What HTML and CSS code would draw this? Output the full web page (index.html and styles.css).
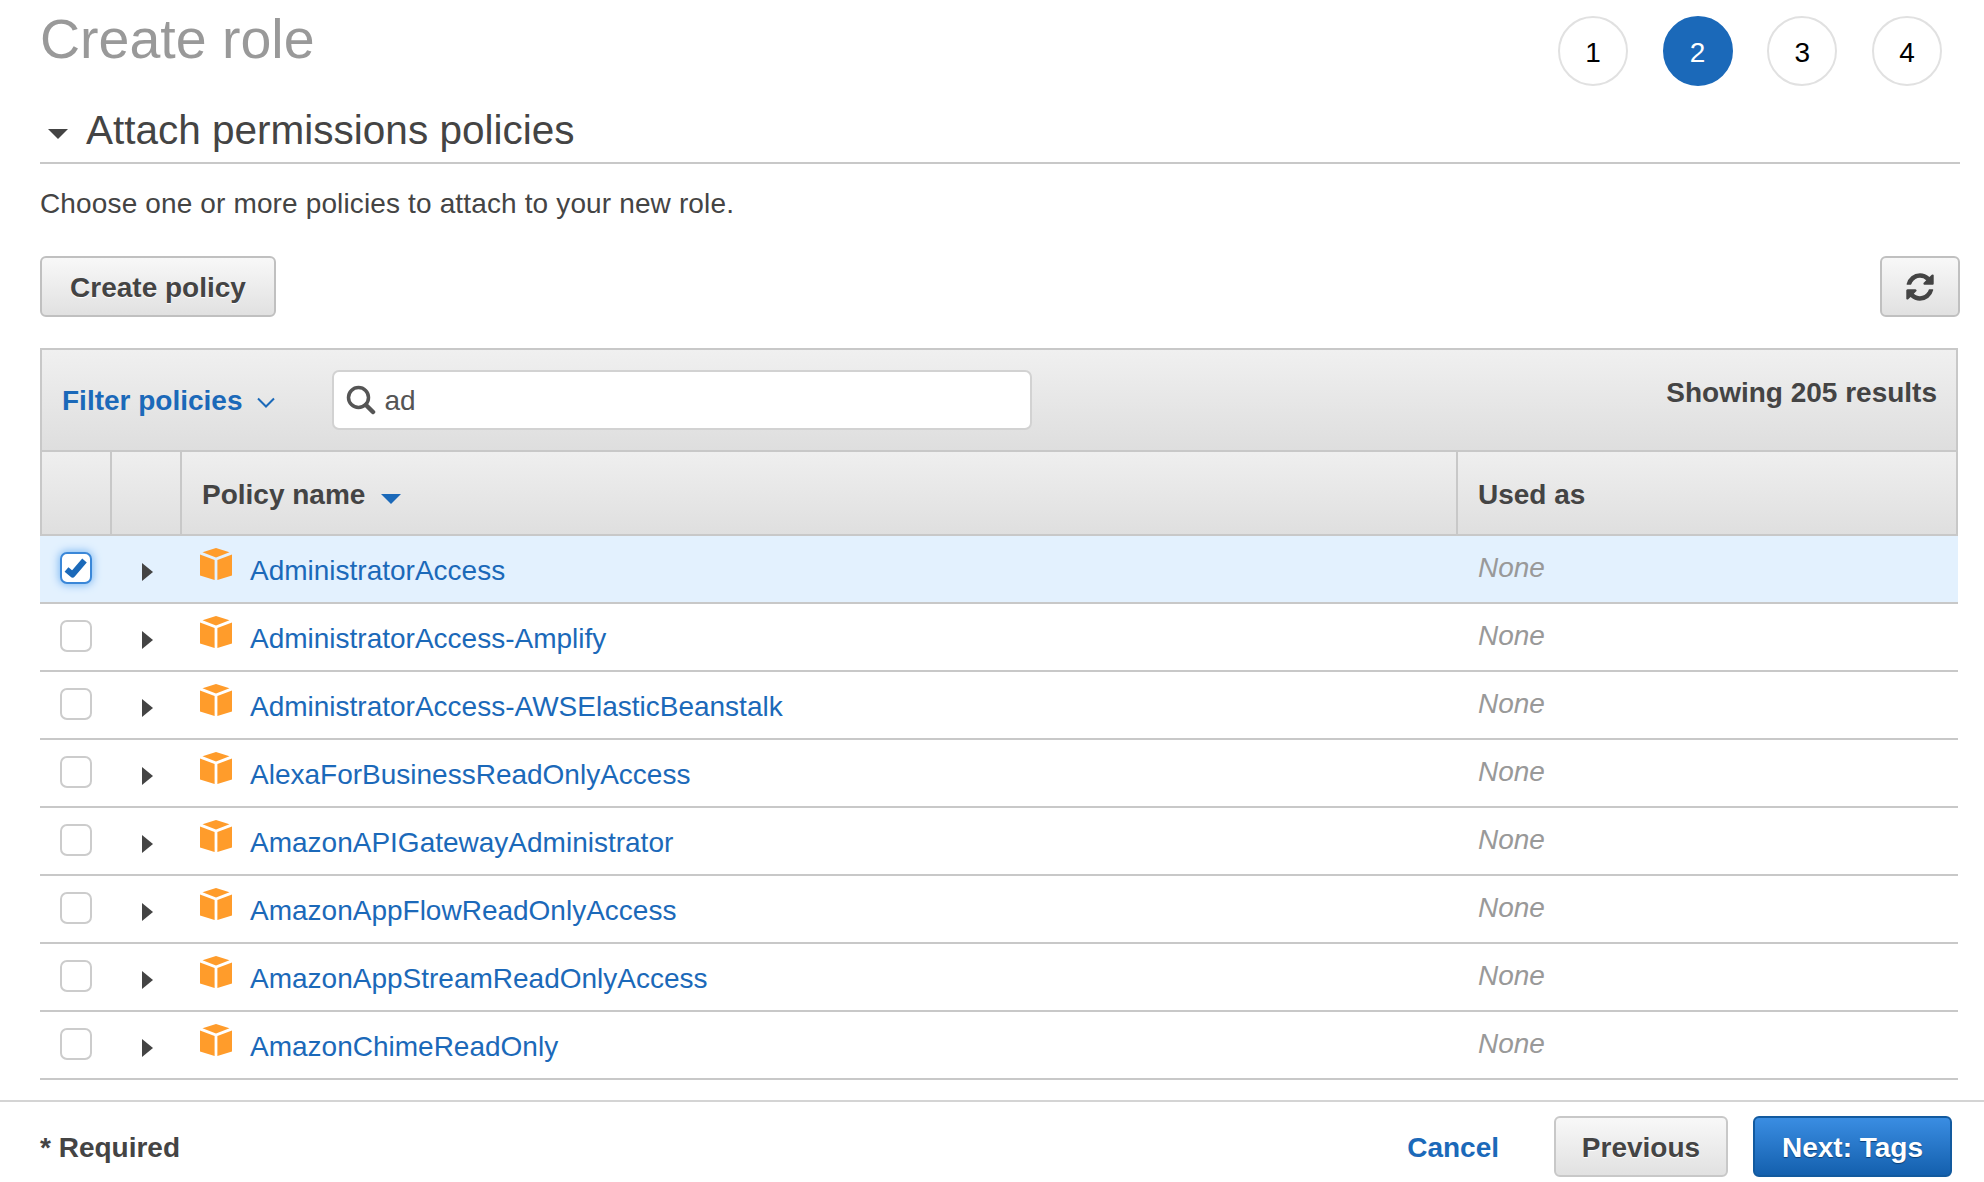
FILE: index.html
```html
<!DOCTYPE html>
<html lang="en">
<head>
    <meta charset="UTF-8">
    <title>Create role</title>
    <link rel="stylesheet" href="styles.css">
</head>
<body>
    <svg class="defs" width="0" height="0">
        <symbol id="cube" viewBox="0 0 32 32">
            <path fill="#ff9c2b" d="M16 0 29.5 4.2 16 9.6 2.5 4.2Z"/>
            <path fill="#ff9c2b" d="M0 6.4 14.6 12V32L0 27.4Z"/>
            <path fill="#ff9c2b" d="M32 6.4 17.4 12V32L32 27.4Z"/>
        </symbol>
    </svg>
    <div id="contener">
        <div class="top">
            <h1>Create role</h1>
            <div class="steps">
                <span class="step">1</span>
                <span class="step active">2</span>
                <span class="step">3</span>
                <span class="step">4</span>
            </div>
        </div>
        <h2><span class="caret-down"></span>Attach permissions policies</h2>
        <p class="intro">Choose one or more policies to attach to your new role.</p>
        <div class="actions">
            <button class="btn btn-create">Create policy</button>
            <button class="btn btn-icon">
                <svg width="32" height="32" viewBox="0 0 1792 1792"><path fill="#444" d="M1639 1056q0 5-1 7-64 268-268 434.5t-478 166.5q-146 0-282.5-55t-243.5-157l-129 129q-19 19-45 19t-45-19-19-45v-448q0-26 19-45t45-19h448q26 0 45 19t19 45-19 45l-137 137q71 66 161 102t187 36q134 0 250-65t186-179q11-17 53-117 8-23 30-23h192q13 0 22.5 9.5t9.5 22.5zm25-800v448q0 26-19 45t-45 19h-448q-26 0-45-19t-19-45 19-45l138-138q-148-137-349-137-134 0-250 65t-186 179q-11 17-53 117-8 23-30 23h-199q-13 0-22.5-9.5t-9.5-22.5v-7q65-268 270-434.5t480-166.5q146 0 284 55.5t245 156.5l130-129q19-19 45-19t45 19 19 45z"/></svg>
            </button>
        </div>
        <div class="policies">
            <div class="filter-bar">
                <a class="filter-link">Filter policies</a>
                <svg class="chevron" width="18" height="11" viewBox="0 0 18 11"><path fill="none" stroke="#1b69b9" stroke-width="2" d="M1 1.5 9 9.5 17 1.5"/></svg>
                <div class="search">
                    <svg width="30" height="30" viewBox="0 0 30 30"><circle cx="12.5" cy="12.5" r="10" fill="none" stroke="#555" stroke-width="3.5"/><path stroke="#555" stroke-width="4.5" stroke-linecap="round" d="M20 20 27 27"/></svg>
                    <span>ad</span>
                </div>
                <div class="count">Showing 205 results</div>
            </div>
            <div class="row head">
                <div></div>
                <div></div>
                <div class="head-name">Policy name<span class="sort-caret"></span></div>
                <div class="head-used">Used as</div>
            </div>
            <div class="row selected">
                <div><span class="check checked"><svg width="28" height="28" viewBox="0 0 28 28"><path fill="none" stroke="#1b69b9" stroke-width="6" stroke-linejoin="round" d="M4.5 15.5 10.5 20.5 22.5 6.5"/></svg></span></div>
                <div><span class="arrow"></span></div>
                <div class="name"><svg class="cube" width="32" height="32"><use href="#cube"/></svg><a>AdministratorAccess</a></div>
                <div class="used">None</div>
            </div>
            <div class="row">
                <div><span class="check"></span></div>
                <div><span class="arrow"></span></div>
                <div class="name"><svg class="cube" width="32" height="32"><use href="#cube"/></svg><a>AdministratorAccess-Amplify</a></div>
                <div class="used">None</div>
            </div>
            <div class="row">
                <div><span class="check"></span></div>
                <div><span class="arrow"></span></div>
                <div class="name"><svg class="cube" width="32" height="32"><use href="#cube"/></svg><a>AdministratorAccess-AWSElasticBeanstalk</a></div>
                <div class="used">None</div>
            </div>
            <div class="row">
                <div><span class="check"></span></div>
                <div><span class="arrow"></span></div>
                <div class="name"><svg class="cube" width="32" height="32"><use href="#cube"/></svg><a>AlexaForBusinessReadOnlyAccess</a></div>
                <div class="used">None</div>
            </div>
            <div class="row">
                <div><span class="check"></span></div>
                <div><span class="arrow"></span></div>
                <div class="name"><svg class="cube" width="32" height="32"><use href="#cube"/></svg><a>AmazonAPIGatewayAdministrator</a></div>
                <div class="used">None</div>
            </div>
            <div class="row">
                <div><span class="check"></span></div>
                <div><span class="arrow"></span></div>
                <div class="name"><svg class="cube" width="32" height="32"><use href="#cube"/></svg><a>AmazonAppFlowReadOnlyAccess</a></div>
                <div class="used">None</div>
            </div>
            <div class="row">
                <div><span class="check"></span></div>
                <div><span class="arrow"></span></div>
                <div class="name"><svg class="cube" width="32" height="32"><use href="#cube"/></svg><a>AmazonAppStreamReadOnlyAccess</a></div>
                <div class="used">None</div>
            </div>
            <div class="row">
                <div><span class="check"></span></div>
                <div><span class="arrow"></span></div>
                <div class="name"><svg class="cube" width="32" height="32"><use href="#cube"/></svg><a>AmazonChimeReadOnly</a></div>
                <div class="used">None</div>
            </div>
        </div>
    </div>
    <footer>
        <div class="required">* Required</div>
        <a class="cancel">Cancel</a>
        <button class="btn btn-prev">Previous</button>
        <button class="btn btn-primary">Next: Tags</button>
    </footer>
</body>
</html>
```

FILE: styles.css
```css
* {
    margin: 0;
    padding: 0;
    box-sizing: border-box;
}
html, body {
    height: 1182px;
    overflow: hidden;
}
body {
    background: #fff;
    color: #444;
    font-family: "Liberation Sans", Arial, sans-serif;
    font-size: 28px;
    line-height: 32px;
}
.defs {
    display: block;
    height: 0;
}
#contener {
    padding: 0 24px 0 40px;
}
.top {
    display: flex;
    justify-content: space-between;
    height: 100px;
    padding-right: 18px;
}
h1 {
    margin-top: 8px;
    color: #999;
    font-size: 55.5px;
    font-weight: 400;
    line-height: 62px;
}
.steps {
    display: flex;
    gap: 34.7px;
    margin-top: 16px;
}
.step {
    display: flex;
    align-items: center;
    justify-content: center;
    width: 70px;
    height: 70px;
    padding-top: 3px;
    border: 2px solid #e1e1e1;
    border-radius: 50%;
    color: #000;
}
.step.active {
    border-color: #1b69b9;
    background: #1b69b9;
    color: #fff;
}
h2 {
    display: flex;
    align-items: center;
    height: 64px;
    padding-bottom: 2px;
    border-bottom: 2px solid #c8c8c8;
    font-size: 40.5px;
    font-weight: 400;
    line-height: 44px;
}
.caret-down {
    width: 0;
    height: 0;
    margin: 7px 18px 0 8px;
    border-top: 10px solid #444;
    border-left: 10px solid transparent;
    border-right: 10px solid transparent;
}
.intro {
    margin-top: 24px;
    letter-spacing: 0.14px;
}
.actions {
    display: flex;
    justify-content: space-between;
    margin-top: 36px;
}
.btn {
    height: 61px;
    padding: 2px 0 0;
    border: 2px solid #c0c0c0;
    border-radius: 6px;
    background: linear-gradient(#f8f8f8, #e1e1e1);
    color: #444;
    font-family: inherit;
    font-size: 28px;
    font-weight: 700;
    text-shadow: 0 1px 1px #fff;
}
.btn-create {
    width: 236px;
}
.btn-icon {
    display: flex;
    align-items: center;
    justify-content: center;
    width: 80px;
    padding: 0;
}
.policies {
    margin: 31px 2px 0 0;
}
.filter-bar {
    display: flex;
    align-items: center;
    height: 104px;
    padding: 0 19px 0 20px;
    border: 2px solid #c8c8c8;
    background: linear-gradient(#f0f0f0, #dedede);
    font-weight: 700;
}
.filter-link {
    padding-top: 2px;
    color: #1b69b9;
}
.chevron {
    margin: 4px 0 0 14px;
}
.search {
    display: flex;
    align-items: center;
    gap: 9px;
    width: 700px;
    height: 60px;
    margin-left: 57px;
    padding-left: 12px;
    border: 2px solid #d2d2d2;
    border-radius: 7px;
    background: #fff;
    color: #555;
    font-weight: 400;
}
.search span {
    padding-top: 1px;
}
.count {
    margin: -15px 0 0 auto;
}
.row {
    display: grid;
    grid-template-columns: 72px 70px 1276px 1fr;
    height: 68px;
    border-bottom: 2px solid #c8c8c8;
}
.row > div:nth-child(1) {
    padding: 16px 0 0 20px;
}
.row > div:nth-child(2) {
    padding: 27px 0 0 30px;
}
.head {
    height: 84px;
    border-left: 2px solid #c8c8c8;
    border-right: 2px solid #c8c8c8;
    background: linear-gradient(#efefef, #dfdfdf);
    font-weight: 700;
    grid-template-columns: 68px 70px 1276px 1fr;
}
.head > div {
    border-left: 2px solid #c8c8c8;
}
.head > div:first-child {
    border-left: 0;
}
.row .head-name {
    display: flex;
    align-items: baseline;
    padding: 27px 0 0 20px;
}
.sort-caret {
    width: 0;
    height: 0;
    margin: 0 0 2px 16px;
    border-top: 10px solid #1b69b9;
    border-left: 10px solid transparent;
    border-right: 10px solid transparent;
}
.row .head-used {
    padding: 27px 0 0 20px;
}
.selected {
    background: #e3f1fe;
}
.check {
    display: block;
    width: 32px;
    height: 32px;
    border: 2px solid #ccc;
    border-radius: 7px;
    background: #fff;
}
.check svg {
    display: block;
}
.check.checked {
    border-color: #3a87d8;
    box-shadow: 0 0 8px 1px #7db8f3;
}
.arrow {
    display: block;
    width: 0;
    height: 0;
    border-left: 11px solid #444;
    border-top: 9px solid transparent;
    border-bottom: 9px solid transparent;
}
.name {
    display: flex;
    align-items: flex-start;
    padding-left: 18px;
}
.cube {
    flex: none;
    margin-top: 12px;
}
.name a {
    margin: 19px 0 0 18px;
    color: #1b69b9;
}
.used {
    padding: 16px 0 0 20px;
    color: #999;
    font-style: italic;
}
footer {
    display: flex;
    align-items: center;
    height: 82px;
    margin-top: 20px;
    padding: 9px 32px 0 40px;
    border-top: 2px solid #d4d4d4;
    font-weight: 700;
}
.required {
    padding-top: 2px;
    margin-right: auto;
}
.cancel {
    padding-top: 2px;
    margin-right: 55px;
    color: #1b69b9;
}
.btn-prev {
    width: 174px;
    margin-right: 25px;
    border-color: #c8c8c8;
}
.btn-primary {
    width: 199px;
    border-color: #125a9f;
    background: linear-gradient(#3a8de2, #1460ae);
    color: #fff;
    text-shadow: 0 1px 1px #0a3f75;
}
```
